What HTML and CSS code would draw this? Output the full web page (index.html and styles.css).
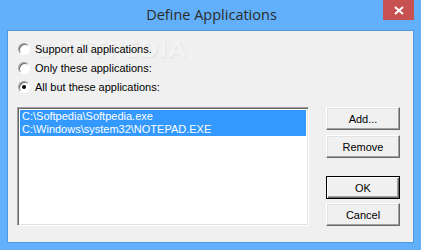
FILE: index.html
```html
<!DOCTYPE html>
<html lang="en">
<head>
    <meta charset="UTF-8">
    <title>Define Applications</title>
    <link rel="stylesheet" href="styles.css">
</head>
<body>
    <div class="window">
        <div class="titlebar">
            <div class="title">Define Applications</div>
            <div class="close">
                <svg width="10" height="9" viewBox="0 0 10 9"><path d="M1 1 L9 8 M9 1 L1 8" stroke="#fff" stroke-width="2"/></svg>
            </div>
        </div>
        <div class="client">
            <div class="watermark">SOFTPEDIA</div>
            <div class="radios">
                <div class="radio"><span class="dot"></span>Support all applications.</div>
                <div class="radio"><span class="dot"></span>Only these applications:</div>
                <div class="radio"><span class="dot checked"></span>All but these applications:</div>
            </div>
            <div class="lower">
                <div class="listbox">
                    <div class="item">C:\Softpedia\Softpedia.exe</div>
                    <div class="item">C:\Windows\system32\NOTEPAD.EXE</div>
                </div>
                <div class="buttons">
                    <button>Add...</button>
                    <button>Remove</button>
                    <button class="default spaced">OK</button>
                    <button>Cancel</button>
                </div>
            </div>
        </div>
    </div>
</body>
</html>
```
FILE: styles.css
```css
body{
    margin: 0;
    width: 421px;
    height: 250px;
    overflow: hidden;
}
.window{
    display: flex;
    flex-direction: column;
    width: 421px;
    height: 250px;
    background-color: #62b0fc;
}
.titlebar{
    position: relative;
    display: flex;
    justify-content: center;
    height: 30px;
    flex-shrink: 0;
}
.title{
    font-family: "Open Sans", sans-serif;
    font-size: 14.5px;
    color: #2b2b2b;
    line-height: 30px;
    padding-left: 2px;
}
.close{
    position: absolute;
    top: 0;
    right: 7px;
    width: 31px;
    height: 20px;
    background-color: #c75050;
    display: flex;
    justify-content: center;
    align-items: center;
}
.client{
    position: relative;
    margin: 0 8px 8px 8px;
    height: 211px;
    background-color: #f0f0f0;
    box-shadow: 0 0 0 1px #4f97de;
    font-family: "Liberation Sans", Arial, sans-serif;
    font-size: 11px;
    color: #000;
    padding: 8px 0 0 9px;
    box-sizing: border-box;
    margin-top: 1px;
}
.watermark{
    position: absolute;
    left: 30px;
    top: 6px;
    font-family: "DejaVu Sans", sans-serif;
    font-weight: bold;
    font-size: 22px;
    letter-spacing: 1px;
    color: #f3f3f3;
    text-shadow: 1px 1px 1px #e2e2e2;
}
.radios{
    position: relative;
    display: flex;
    flex-direction: column;
    padding-left: 1px;
}
.radio{
    display: flex;
    align-items: center;
    height: 19px;
    gap: 5px;
}
.dot{
    width: 12px;
    height: 12px;
    border-radius: 50%;
    box-sizing: border-box;
    background-color: #fff;
    border: 1px solid;
    border-color: #a0a0a0 #ffffff #ffffff #a0a0a0;
    box-shadow: inset 1px 1px 0 #696969, 0 0 0 0 #fff;
    display: flex;
    justify-content: center;
    align-items: center;
}
.checked::after{
    content: "";
    width: 4px;
    height: 4px;
    border-radius: 50%;
    background-color: #000;
}
.lower{
    display: flex;
    gap: 17px;
    margin-top: 11px;
}
.listbox{
    width: 292px;
    height: 119px;
    box-sizing: border-box;
    background-color: #fff;
    border: 1px solid;
    border-color: #a0a0a0 #ffffff #ffffff #a0a0a0;
    box-shadow: inset 1px 1px 0 #696969, inset -1px -1px 0 #e3e3e3;
    padding: 2px 2px 0 2px;
}
.item{
    background-color: #3399ff;
    color: #fff;
    height: 13px;
    line-height: 13px;
    padding-left: 2px;
}
.buttons{
    display: flex;
    flex-direction: column;
    gap: 5px;
}
button{
    width: 74px;
    height: 23px;
    padding: 0;
    font-family: "Liberation Sans", Arial, sans-serif;
    font-size: 11px;
    color: #000;
    background-color: #f0f0f0;
    border: 1px solid;
    border-color: #ffffff #696969 #696969 #ffffff;
    box-shadow: inset -1px -1px 0 #a0a0a0, inset 1px 1px 0 #e3e3e3;
}
.default{
    border: 1px solid #000;
    box-shadow: inset 1px 1px 0 #fff, inset -1px -1px 0 #696969, inset -2px -2px 0 #a0a0a0;
}
.spaced{
    margin-top: 13px;
}
.buttons button:last-child{
    margin-top: -1px;
}
```
